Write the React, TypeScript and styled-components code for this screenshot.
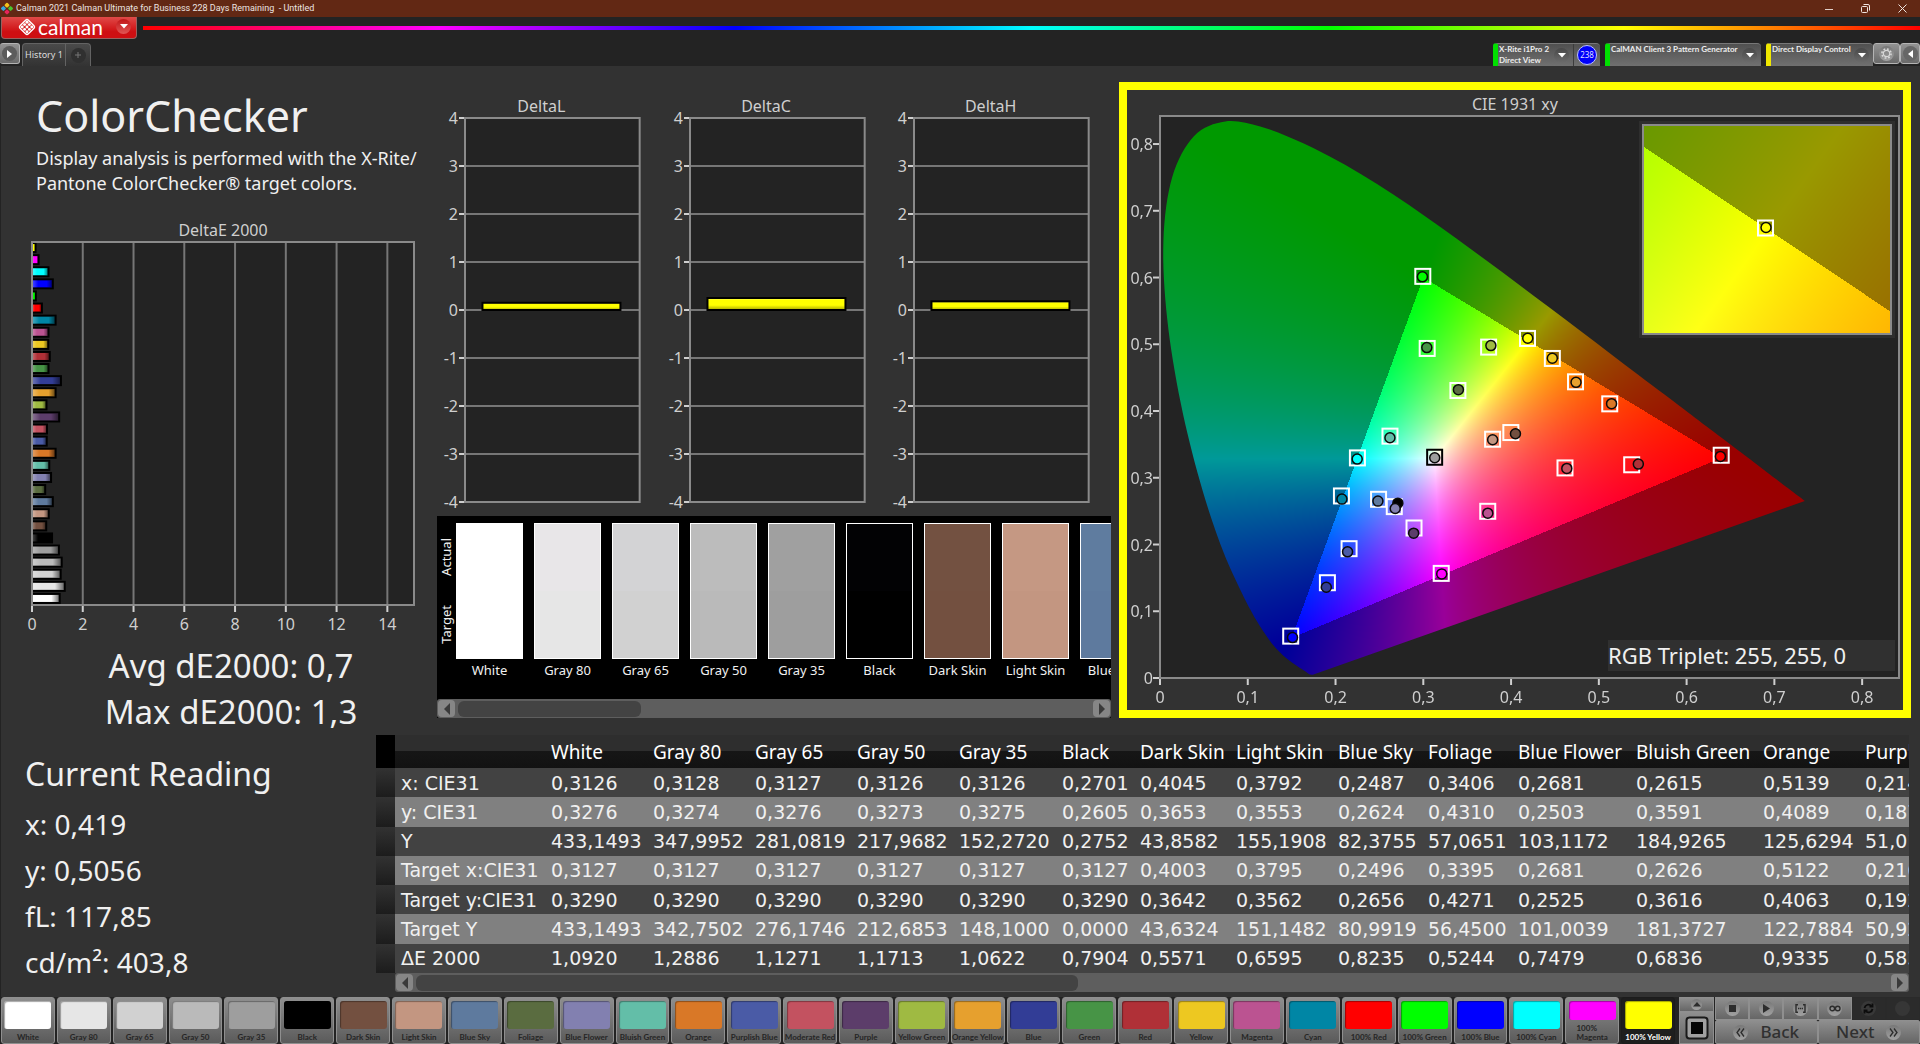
import React, { useLayoutEffect, useRef } from "react";
import styled, { createGlobalStyle, css } from "styled-components";

/* ---------- data ---------- */

type Patch = { name: string; color: string; dE: number };

const patches: Patch[] = [
  { name: "White", color: "#ffffff", dE: 1.09 },
  { name: "Gray 80", color: "#e6e6e6", dE: 1.29 },
  { name: "Gray 65", color: "#d1d1d1", dE: 1.13 },
  { name: "Gray 50", color: "#bababa", dE: 1.17 },
  { name: "Gray 35", color: "#9e9e9e", dE: 1.06 },
  { name: "Black", color: "#000000", dE: 0.79 },
  { name: "Dark Skin", color: "#735040", dE: 0.56 },
  { name: "Light Skin", color: "#c39681", dE: 0.66 },
  { name: "Blue Sky", color: "#5e7a9e", dE: 0.82 },
  { name: "Foliage", color: "#5a6c40", dE: 0.52 },
  { name: "Blue Flower", color: "#8280b0", dE: 0.75 },
  { name: "Bluish Green", color: "#63bea8", dE: 0.68 },
  { name: "Orange", color: "#d97827", dE: 0.93 },
  { name: "Purplish Blue", color: "#4a5ba6", dE: 0.58 },
  { name: "Moderate Red", color: "#c35260", dE: 0.59 },
  { name: "Purple", color: "#5c3d6a", dE: 1.07 },
  { name: "Yellow Green", color: "#9fba42", dE: 0.57 },
  { name: "Orange Yellow", color: "#e6a02e", dE: 0.93 },
  { name: "Blue", color: "#323d96", dE: 1.14 },
  { name: "Green", color: "#479446", dE: 0.65 },
  { name: "Red", color: "#b03037", dE: 0.7 },
  { name: "Yellow", color: "#edc821", dE: 0.64 },
  { name: "Magenta", color: "#bb5391", dE: 0.65 },
  { name: "Cyan", color: "#0086a5", dE: 0.93 },
  { name: "100% Red", color: "#ff0000", dE: 0.39 },
  { name: "100% Green", color: "#00ff00", dE: 0.15 },
  { name: "100% Blue", color: "#0000ff", dE: 0.82 },
  { name: "100% Cyan", color: "#00ffff", dE: 0.65 },
  { name: "100% Magenta", color: "#ff00ff", dE: 0.26 },
  { name: "100% Yellow", color: "#ffff00", dE: 0.14 },
];

const actualTint: Record<string, string> = {
  "Gray 80": "#e8e6e8",
  "Gray 65": "#d3d3d5",
  "Gray 50": "#bcbcbc",
  "Gray 35": "#a0a0a0",
  Black: "#020204",
  "Dark Skin": "#735141",
  "Light Skin": "#c59883",
  "Blue Sky": "#5f7c9f",
};

const columns: { name: string; width: number; values: string[] }[] = [
  { name: "White", width: 102, values: ["0,3126", "0,3276", "433,1493", "0,3127", "0,3290", "433,1493", "1,0920"] },
  { name: "Gray 80", width: 102, values: ["0,3128", "0,3274", "347,9952", "0,3127", "0,3290", "342,7502", "1,2886"] },
  { name: "Gray 65", width: 102, values: ["0,3127", "0,3276", "281,0819", "0,3127", "0,3290", "276,1746", "1,1271"] },
  { name: "Gray 50", width: 102, values: ["0,3126", "0,3273", "217,9682", "0,3127", "0,3290", "212,6853", "1,1713"] },
  { name: "Gray 35", width: 103, values: ["0,3126", "0,3275", "152,2720", "0,3127", "0,3290", "148,1000", "1,0622"] },
  { name: "Black", width: 78, values: ["0,2701", "0,2605", "0,2752", "0,3127", "0,3290", "0,0000", "0,7904"] },
  { name: "Dark Skin", width: 96, values: ["0,4045", "0,3653", "43,8582", "0,4003", "0,3642", "43,6324", "0,5571"] },
  { name: "Light Skin", width: 102, values: ["0,3792", "0,3553", "155,1908", "0,3795", "0,3562", "151,1482", "0,6595"] },
  { name: "Blue Sky", width: 90, values: ["0,2487", "0,2624", "82,3755", "0,2496", "0,2656", "80,9919", "0,8235"] },
  { name: "Foliage", width: 90, values: ["0,3406", "0,4310", "57,0651", "0,3395", "0,4271", "56,4500", "0,5244"] },
  { name: "Blue Flower", width: 118, values: ["0,2681", "0,2503", "103,1172", "0,2681", "0,2525", "101,0039", "0,7479"] },
  { name: "Bluish Green", width: 127, values: ["0,2615", "0,3591", "184,9265", "0,2626", "0,3616", "181,3727", "0,6836"] },
  { name: "Orange", width: 102, values: ["0,5139", "0,4089", "125,6294", "0,5122", "0,4063", "122,7884", "0,9335"] },
  { name: "Purplish Blue", width: 136, values: ["0,2147", "0,1877", "51,0148", "0,2167", "0,1928", "50,9215", "0,5838"] },
];

const rowLabels = ["x: CIE31", "y: CIE31", "Y", "Target x:CIE31", "Target y:CIE31", "Target Y", "ΔE 2000"];

const LABEL_WIDTH = 150;
const TABLE_WIDTH = LABEL_WIDTH + columns.reduce((sum, c) => sum + c.width, 0);

/* target x, target y, measured x, measured y, fill */
const chroma: [number, number, number, number, string][] = [
  [0.3, 0.601, 0.299, 0.601, "#00ff00"],
  [0.305, 0.493, 0.304, 0.495, "#479446"],
  [0.375, 0.495, 0.377, 0.498, "#9fba42"],
  [0.34, 0.43, 0.34, 0.432, "#5a6c40"],
  [0.2626, 0.3616, 0.262, 0.36, "#63bea8"],
  [0.2255, 0.329, 0.2247, 0.328, "#00ffff"],
  [0.2073, 0.272, 0.2073, 0.268, "#0086a5"],
  [0.2496, 0.267, 0.2483, 0.265, "#5e7a9e"],
  [0.2675, 0.256, 0.268, 0.254, "#8280b0"],
  [0.29, 0.224, 0.289, 0.217, "#5c3d6a"],
  [0.216, 0.193, 0.2137, 0.189, "#4a5ba6"],
  [0.1913, 0.142, 0.1895, 0.136, "#323d96"],
  [0.1495, 0.062, 0.151, 0.0605, "#0000ff"],
  [0.321, 0.156, 0.321, 0.156, "#ff00ff"],
  [0.374, 0.249, 0.3735, 0.247, "#bb5391"],
  [0.3795, 0.357, 0.379, 0.357, "#c39681"],
  [0.4003, 0.367, 0.405, 0.366, "#735040"],
  [0.4193, 0.508, 0.419, 0.509, "#ffff00"],
  [0.4476, 0.478, 0.447, 0.479, "#edc821"],
  [0.474, 0.443, 0.474, 0.443, "#e6a02e"],
  [0.513, 0.41, 0.5145, 0.411, "#d97827"],
  [0.462, 0.314, 0.4635, 0.314, "#c35260"],
  [0.538, 0.3187, 0.545, 0.3205, "#b03037"],
  [0.64, 0.333, 0.6385, 0.332, "#ff0000"],
];

/* spectral locus, 380 to 700 nm */
const locus: [number, number][] = [
  [0.1741, 0.005], [0.1714, 0.0051], [0.1689, 0.0069], [0.1644, 0.0109], [0.1566, 0.0177],
  [0.144, 0.0297], [0.1355, 0.0399], [0.1241, 0.0578], [0.1096, 0.0868], [0.0913, 0.1327],
  [0.0687, 0.2007], [0.0454, 0.295], [0.0235, 0.4127], [0.0082, 0.5384], [0.0039, 0.6548],
  [0.0139, 0.7502], [0.0389, 0.812], [0.0743, 0.8338], [0.1142, 0.8262], [0.1547, 0.8059],
  [0.1929, 0.7816], [0.2296, 0.7543], [0.2658, 0.7243], [0.3016, 0.6923], [0.3373, 0.6589],
  [0.3731, 0.6245], [0.4087, 0.5896], [0.4441, 0.5547], [0.4788, 0.5202], [0.5125, 0.4866],
  [0.5448, 0.4544], [0.5752, 0.4242], [0.6029, 0.3965], [0.627, 0.3725], [0.6658, 0.334],
  [0.6915, 0.3083], [0.719, 0.2809], [0.7347, 0.2653],
];

/* ---------- base ---------- */

const sans = `"Noto Sans", "Open Sans", sans-serif`;
const narrow = `Lato, "Noto Sans", sans-serif`;
const wide = `"DejaVu Sans", "Noto Sans", sans-serif`;

const GlobalStyle = createGlobalStyle`
  *, *::before, *::after { box-sizing: border-box; }
  body { margin: 0; background: #323232; color: #f0f0f0; font-family: ${sans}; }
  button { font: inherit; color: inherit; padding: 0; border: 0; background: none; }
  h1, h2, p { margin: 0; font-weight: 400; }
`;

const Shell = styled.div`
  display: flex;
  flex-direction: column;
  min-height: 100vh;
  overflow: hidden;
`;

/* ---------- window chrome ---------- */

const TitleBar = styled.header`
  display: flex;
  align-items: center;
  gap: 2px;
  height: 17px;
  background: #622814;
  font: 9px/17px Roboto, ${sans};
  color: #ece4e0;
`;

const WindowTitle = styled.span`
  flex: 1;
  white-space: pre;
`;

const WindowButton = styled.button`
  display: grid;
  place-items: center;
  width: 35px;
  height: 17px;
`;

const Header = styled.div`
  background: #232323;
`;

const BrandRow = styled.div`
  display: flex;
  align-items: center;
  gap: 6px;
  height: 26px;
  padding-left: 1px;
`;

const BrandButton = styled.button`
  display: flex;
  align-items: center;
  align-self: flex-start;
  gap: 2px;
  width: 136px;
  height: 22px;
  padding: 0 5px 2px 16px;
  background: linear-gradient(#e04a48, #cf0f12 70%);
  border: 1px solid #99615f;
  border-top: 0;
  border-radius: 0 0 4px 4px;
  font: 21px/20px ${narrow};
  color: #fff;
`;

const BrandName = styled.span`
  flex: 1;
  text-align: left;
`;

const Knob = styled.span<{ $size?: number; $tone?: string }>`
  display: grid;
  flex: none;
  place-items: center;
  width: ${(p) => p.$size ?? 15}px;
  height: ${(p) => p.$size ?? 15}px;
  border-radius: 50%;
  background: ${(p) => p.$tone ?? "linear-gradient(#484848, #6c6c6c)"};
`;

const Rainbow = styled.div`
  flex: 1;
  height: 4px;
  margin-bottom: 4px;
  background: linear-gradient(90deg, #f00, #f0f, #00f, #0ff, #0f0, #ff0, #f00);
`;

const TabRow = styled.div`
  display: flex;
  align-items: flex-start;
  height: 23px;
`;

const Tab = styled.button<{ $width: number; $side?: "left" | "right" }>`
  display: grid;
  place-items: center;
  width: ${(p) => p.$width}px;
  height: 23px;
  border: 1px solid #636363;
  border-bottom: 0;
  border-radius: ${(p) => (p.$side === "left" ? "4px 0 0 0" : "0 4px 0 0")};
  background: linear-gradient(#4a4a4a, #333);
  font-size: 9px;
  line-height: 22px;
  color: #dcdcdc;
  & + & { border-left: 0; }
`;

const SquareButton = styled.button<{ $width: number }>`
  display: grid;
  place-items: center;
  width: ${(p) => p.$width}px;
  height: 21px;
  border: 1px solid #b4b4b4;
  border-radius: 3px;
  background: linear-gradient(#929292, #6a6a6a);
`;

const HistoryTabs = styled.div`
  display: flex;
  flex: 1;
  gap: 0;
  ${SquareButton} { margin-right: 2px; border-left: 0; }
`;

const Devices = styled.div`
  display: flex;
  gap: 5px;
`;

const DeviceBox = styled.div<{ $accent: string; $width: number }>`
  display: flex;
  width: ${(p) => p.$width}px;
  height: 23px;
  border-left: 5px solid ${(p) => p.$accent};
  border-top: 1px solid #777;
  border-radius: 3px 4px 0 0;
  background: linear-gradient(#505050, #707070);
`;

const DeviceButton = styled.button`
  display: flex;
  flex: 1;
  align-items: center;
  min-width: 0;
  padding: 0 4px 0 1px;
  font: 8px/11px ${narrow};
  font-weight: 700;
  color: #ededed;
`;

const DeviceName = styled.span`
  flex: 1;
  align-self: flex-start;
  min-width: 0;
  text-align: left;
  white-space: pre;
`;

const Counter = styled.span`
  display: grid;
  place-items: center;
  width: 27px;
  border-left: 1px solid #3c3c3c;
`;

const CounterDot = styled.span`
  width: 20px;
  height: 20px;
  border: 1px solid #b9c0ff;
  border-radius: 50%;
  background: #0000fa;
  font-size: 8px;
  line-height: 18px;
  text-align: center;
  color: #dcdcff;
`;

const ToolButtons = styled.div`
  display: flex;
`;

/* ---------- workspace ---------- */

const Workspace = styled.main`
  display: flex;
  flex: 1;
  flex-direction: column;
  border-left: 1px solid #232323;
  background: #323232;
`;

const Upper = styled.div`
  display: grid;
  flex: 1;
  grid-template-columns: 436px minmax(0, 674fr) minmax(0, 800fr);
  min-height: 600px;
  padding-right: 9px;
`;

const Summary = styled.section`
  display: flex;
  flex-direction: column;
  padding: 20px 0 0 31px;
`;

const Heading = styled.h1`
  padding-left: 4px;
  font: 43px/60px ${sans};
`;

const Intro = styled.p`
  padding-left: 4px;
  font-size: 18px;
  line-height: 25px;
  white-space: nowrap;
`;

const ChartTitle = styled.div<{ $top?: number }>`
  padding-top: ${(p) => p.$top ?? 0}px;
  font-size: 16px;
  line-height: 24px;
  text-align: center;
  color: #cfcfcf;
`;

const DeltaEFigure = styled.figure`
  display: flex;
  flex: 1;
  flex-direction: column;
  margin: 22px 23px 38px 0;
`;

const Plot = styled.div`
  position: relative;
  flex: 1;
  background: #232323;
`;

const PlotSvg = styled.svg`
  position: absolute;
  inset: 0;
  width: 100%;
  height: 100%;
  overflow: visible;
  font-family: ${sans};
  font-size: 16px;
`;

const GamutCanvas = styled.canvas`
  position: absolute;
  inset: 0;
  width: 100%;
  height: 100%;
`;

const Stats = styled.div`
  padding-right: 7px;
  font-size: 33px;
  line-height: 46px;
  text-align: center;
`;

const Middle = styled.section`
  display: flex;
  flex-direction: column;
  padding: 28px 0 17px;
`;

const DeltaRow = styled.div`
  display: grid;
  flex: 1;
  grid-template-columns: repeat(3, 1fr);
`;

const DeltaFigure = styled.figure`
  display: flex;
  flex-direction: column;
  margin: 0 22px 0 6px;
  ${Plot} { margin-left: 22px; }
`;

const SwatchPanel = styled.div`
  display: flex;
  flex-direction: column;
  margin-top: 14px;
  background: #000;
`;

const SwatchStrip = styled.div`
  display: flex;
  height: 183px;
  padding-top: 7px;
  overflow: hidden;
`;

const SideLabels = styled.div`
  display: flex;
  flex: none;
  flex-direction: column;
  justify-content: space-around;
  align-items: center;
  width: 19px;
  height: 136px;
  font-size: 13px;
  line-height: 19px;
`;

const SideLabel = styled.span`
  writing-mode: vertical-rl;
  transform: rotate(180deg);
`;

const SwatchCell = styled.div`
  flex: none;
  width: 67px;
  margin-right: 11px;
  font-size: 13px;
  line-height: 23px;
  text-align: center;
  white-space: nowrap;
`;

const Swatch = styled.div<{ $actual: string; $target: string }>`
  height: 136px;
  border: 1px solid #fff;
  background: linear-gradient(${(p) => p.$actual} 50%, ${(p) => p.$target} 50%);
`;

/* ---------- scroll bar ---------- */

const ScrollTrack = styled.div`
  display: flex;
  align-items: center;
  height: 19px;
  padding: 1px;
  gap: 3px;
  border-radius: 3px;
  background: #5e5e5e;
`;

const ScrollButton = styled.button`
  display: grid;
  place-items: center;
  width: 17px;
  height: 17px;
  border-radius: 4px;
  background: #868686;
`;

const ScrollLane = styled.div`
  flex: 1;
  height: 16px;
`;

const ScrollThumb = styled.div`
  height: 16px;
  border-radius: 6px;
  background: #434343;
`;

function ScrollBar({ size }: { size: number }) {
  return (
    <ScrollTrack>
      <ScrollButton aria-label="Scroll left">
        <svg width="8" height="12"><path d="M7 0V12L1 6Z" fill="#3a3a3a" /></svg>
      </ScrollButton>
      <ScrollLane>
        <ScrollThumb style={{ width: `${size}%` }} />
      </ScrollLane>
      <ScrollButton aria-label="Scroll right">
        <svg width="8" height="12"><path d="M1 0V12L7 6Z" fill="#3a3a3a" /></svg>
      </ScrollButton>
    </ScrollTrack>
  );
}

/* ---------- charts ---------- */

const AXIS = "#8a8a8a";
const GRID = "#767676";
const LABEL = "#cfcfcf";

function DeltaEChart() {
  const max = 15.05;
  const pitch = 100 / patches.length;
  const ticks = [0, 2, 4, 6, 8, 10, 12, 14];
  return (
    <PlotSvg>
      <defs>
        <linearGradient id="barShade">
          <stop offset="0" stopColor="#fff" stopOpacity="0.3" />
          <stop offset="0.3" stopColor="#fff" stopOpacity="0" />
          <stop offset="0.7" stopColor="#000" stopOpacity="0" />
          <stop offset="1" stopColor="#000" stopOpacity="0.6" />
        </linearGradient>
      </defs>
      {ticks.map((t) => (
        <g key={t}>
          <svg x={`${(t / max) * 100}%`} overflow="visible">
            <line y1="0" y2="100%" stroke={GRID} strokeWidth="2" />
          </svg>
          <svg x={`${(t / max) * 100}%`} y="100%" overflow="visible">
            <line y1="0" y2="7" stroke={LABEL} strokeWidth="2" />
            <text y="25" textAnchor="middle" fill={LABEL}>{t}</text>
          </svg>
        </g>
      ))}
      {[...patches].reverse().map((p, i) => (
        <svg key={p.name} x="0" y={`${(i + 0.5) * pitch}%`} overflow="visible">
          <rect x="0" y="-5" width={`${(p.dE / max) * 100}%`} height="9" fill={p.color} stroke="#000" strokeWidth="2" />
          <rect x="0" y="-4" width={`${(p.dE / max) * 100}%`} height="7" fill="url(#barShade)" />
        </svg>
      ))}
      <rect width="100%" height="100%" fill="none" stroke={AXIS} strokeWidth="2" />
    </PlotSvg>
  );
}

function DeltaChart({ title, value }: { title: string; value: number }) {
  const ticks = [4, 3, 2, 1, 0, -1, -2, -3, -4];
  return (
    <DeltaFigure>
      <ChartTitle as="figcaption">{title}</ChartTitle>
      <Plot>
        <PlotSvg>
          <defs>
            <linearGradient id="yellowBar" x2="0" y2="1">
              <stop offset="0" stopColor="#ffff60" />
              <stop offset="0.2" stopColor="#ffff00" />
              <stop offset="0.6" stopColor="#ffff00" />
              <stop offset="1" stopColor="#a5a500" />
            </linearGradient>
          </defs>
          {ticks.map((t) => (
            <svg key={t} y={`${((4 - t) / 8) * 100}%`} overflow="visible">
              <line x1="0" x2="100%" stroke={GRID} strokeWidth="2" />
              <line x1="-6" x2="0" stroke={LABEL} strokeWidth="2" />
              <text x="-7" y="6" textAnchor="end" fill={LABEL}>{t}</text>
            </svg>
          ))}
          <rect width="100%" height="100%" fill="none" stroke={AXIS} strokeWidth="2" />
          <rect
            x="10%"
            y={`${((4 - value) / 8) * 100}%`}
            width="79%"
            height={`${(value / 8) * 100}%`}
            fill="url(#yellowBar)"
            stroke="#000"
            strokeWidth="2"
          />
        </PlotSvg>
      </Plot>
    </DeltaFigure>
  );
}

type Bounds = { x0: number; x1: number; y0: number; y1: number };

function paintGamut(canvas: HTMLCanvasElement, b: Bounds, clip: boolean) {
  const w = Math.max(1, Math.round(canvas.clientWidth));
  const h = Math.max(1, Math.round(canvas.clientHeight));
  canvas.width = w;
  canvas.height = h;
  const ctx = canvas.getContext("2d");
  if (!ctx) return;
  const img = ctx.createImageData(w, h);
  for (let j = 0; j < h; j++) {
    const y = Math.max(0.0005, b.y1 - ((j + 0.5) / h) * (b.y1 - b.y0));
    for (let i = 0; i < w; i++) {
      const x = b.x0 + ((i + 0.5) / w) * (b.x1 - b.x0);
      const z = 1 - x - y;
      const rgb = [
        3.2406 * x - 1.5372 * y - 0.4986 * z,
        -0.9689 * x + 1.8758 * y + 0.0415 * z,
        0.0557 * x - 0.204 * y + 1.057 * z,
      ];
      const outside = Math.min(rgb[0], rgb[1], rgb[2]) < 0;
      const top = Math.max(rgb[0], rgb[1], rgb[2]);
      const dim = outside ? 0.6 : 1;
      const k = (j * w + i) * 4;
      for (let c = 0; c < 3; c++) {
        img.data[k + c] = (255 * dim * Math.max(0, rgb[c])) / top;
      }
      img.data[k + 3] = 255;
    }
  }
  ctx.putImageData(img, 0, 0);
  if (!clip) return;
  const pts = locus.map((p) => [
    ((p[0] - b.x0) / (b.x1 - b.x0)) * w,
    ((b.y1 - p[1]) / (b.y1 - b.y0)) * h,
  ]);
  ctx.globalCompositeOperation = "destination-in";
  ctx.beginPath();
  ctx.moveTo(pts[0][0], pts[0][1]);
  for (let n = 0; n < pts.length - 1; n++) {
    const before = pts[Math.max(0, n - 1)];
    const from = pts[n];
    const to = pts[n + 1];
    const after = pts[Math.min(pts.length - 1, n + 2)];
    ctx.bezierCurveTo(
      from[0] + (to[0] - before[0]) / 6,
      from[1] + (to[1] - before[1]) / 6,
      to[0] - (after[0] - from[0]) / 6,
      to[1] - (after[1] - from[1]) / 6,
      to[0],
      to[1]
    );
  }
  ctx.closePath();
  ctx.fill();
}

function Gamut({ bounds, clip }: { bounds: Bounds; clip: boolean }) {
  const ref = useRef<HTMLCanvasElement>(null);
  useLayoutEffect(() => {
    const draw = () => ref.current && paintGamut(ref.current, bounds, clip);
    draw();
    window.addEventListener("resize", draw);
    return () => window.removeEventListener("resize", draw);
  }, [bounds, clip]);
  return <GamutCanvas ref={ref} />;
}

const CiePanel = styled.section`
  display: flex;
  flex-direction: column;
  margin: 16px 0 17px 8px;
  border: 8px solid #ffff00;
  ${Plot} { margin: 0 4px 32px 33px; }
`;

const Inset = styled.div`
  position: absolute;
  top: 8px;
  right: 7px;
  width: 250px;
  height: 211px;
  border: 2px solid #8a8a8a;
  box-shadow: 0 0 0 3px #2e2e2e;
`;

const Triplet = styled.div`
  position: absolute;
  right: 4px;
  bottom: 7px;
  width: 287px;
  background: #303030;
  font-size: 22px;
  line-height: 31px;
`;

const MAIN: Bounds = { x0: 0, x1: 0.842, y0: 0, y1: 0.842 };
const ZOOM: Bounds = { x0: 0.394, x1: 0.444, y0: 0.4804, y1: 0.5304 };

function Marker({ x, y, fill, square, stroke = "#fff" }: { x: number; y: number; fill?: string; square?: boolean; stroke?: string }) {
  return (
    <svg x={`${(x / MAIN.x1) * 100}%`} y={`${(1 - y / MAIN.y1) * 100}%`} overflow="visible">
      {square ? (
        <rect x="-8" y="-8" width="15" height="15" fill="none" stroke={stroke} strokeWidth="2" />
      ) : (
        <circle r="5" fill={fill} stroke="#0a0a0a" strokeWidth="1.5" />
      )}
    </svg>
  );
}

function CieChart() {
  const ticks = [0, 1, 2, 3, 4, 5, 6, 7, 8];
  const text = (n: number) => (n === 0 ? "0" : `0,${n}`);
  return (
    <CiePanel>
      <ChartTitle $top={2}>CIE 1931 xy</ChartTitle>
      <Plot>
        <Gamut bounds={MAIN} clip />
        <PlotSvg>
          <rect width="100%" height="100%" fill="none" stroke={AXIS} strokeWidth="2" />
          {ticks.map((n) => (
            <g key={n}>
              <svg x={`${(n / 8.42) * 100}%`} y="100%" overflow="visible">
                <line y1="1" y2="7" stroke={LABEL} strokeWidth="2" />
                <text y="25" textAnchor="middle" fill={LABEL}>{text(n)}</text>
              </svg>
              <svg y={`${(1 - n / 8.42) * 100}%`} overflow="visible">
                <line x1="-7" x2="-1" stroke={LABEL} strokeWidth="2" />
                <text x="-7" y="6" textAnchor="end" fill={LABEL}>{text(n)}</text>
              </svg>
            </g>
          ))}
          {chroma.map((c, i) => (
            <Marker key={i} x={c[0]} y={c[1]} square />
          ))}
          <Marker x={0.3135} y={0.33} square stroke="#000" />
          <Marker x={0.271} y={0.262} fill="#000" />
          <Marker x={0.313} y={0.33} fill="#9e9e9e" />
          {chroma.map((c, i) => (
            <Marker key={i} x={c[2]} y={c[3]} fill={c[4]} />
          ))}
        </PlotSvg>
        <Inset>
          <Gamut bounds={ZOOM} clip={false} />
          <PlotSvg>
            <svg x="50%" y="50%" overflow="visible">
              <rect x="-9" y="-9" width="15" height="15" fill="none" stroke="#fff" strokeWidth="2" />
              <circle cx="-1" cy="-2" r="5" fill="#ffff00" stroke="#0a0a0a" strokeWidth="1.5" />
            </svg>
          </PlotSvg>
        </Inset>
        <Triplet>RGB Triplet: 255, 255, 0</Triplet>
      </Plot>
    </CiePanel>
  );
}

/* ---------- lower section ---------- */

const Lower = styled.div`
  display: grid;
  grid-template-columns: 375px minmax(0, 1fr);
  padding: 0 11px 5px 0;
`;

const Reading = styled.section`
  padding: 15px 0 0 24px;
  font-size: 28px;
  line-height: 46px;
`;

const ReadingTitle = styled.h2`
  margin-bottom: 3px;
  font-size: 32px;
  line-height: 48px;
`;

const DataBlock = styled.div`
  display: grid;
  grid-template-columns: 19px minmax(0, 1fr);
`;

const Gutter = styled.div`
  display: grid;
  grid-template-rows: 33px repeat(7, 1fr);
  height: 238px;
`;

const GutterCell = styled.div<{ $head?: boolean }>`
  background: ${(p) => (p.$head ? "#000" : "linear-gradient(#323232, #1c1c1c)")};
`;

const TableClip = styled.div`
  overflow: hidden;
`;

const DataTable = styled.table`
  width: ${TABLE_WIDTH}px;
  height: 238px;
  border-collapse: collapse;
  table-layout: fixed;
  font: 19px/26px ${wide};
  white-space: nowrap;
  th, td { padding: 0 0 0 6px; font-weight: 400; text-align: left; }
`;

const HeadRow = styled.tr`
  height: 33px;
  background: linear-gradient(#2e2e2e 50%, #161616 50%, #121212);
  font-family: ${sans};
  font-size: 19px;
  color: #fff;
`;

const BodyRow = styled.tr<{ $light: boolean }>`
  background: ${(p) => (p.$light ? "#808080" : "#424242")};
`;

/* ---------- pattern bar ---------- */

const PatternBar = styled.footer`
  display: flex;
  height: 47px;
  background: #232323;
`;

const PatternList = styled.div`
  display: grid;
  flex: 1;
  grid-template-columns: repeat(30, minmax(0, 1fr));
  gap: 2px;
  padding: 0 4px 0 1px;
`;

const PatternButton = styled.button<{ $active: boolean }>`
  display: flex;
  flex-direction: column;
  align-items: center;
  padding: 3px 0 1px;
  border: 1px solid ${(p) => (p.$active ? "#1c1c1c" : "#8f8f8f")};
  border-radius: 3px;
  background: ${(p) => (p.$active ? "#1e1e1e" : "linear-gradient(#8e8e8e, #5a5a5a)")};
  font: 8px/9px ${narrow};
  font-weight: 700;
  color: ${(p) => (p.$active ? "#fff" : "#262626")};
`;

const PatternColor = styled.span<{ $color: string }>`
  flex: 1;
  width: 47px;
  border-radius: 3px;
  background: ${(p) => p.$color};
  box-shadow: inset 1px 1px 1px rgba(0, 0, 0, 0.35);
`;

const PatternName = styled.span<{ $wrap: boolean }>`
  padding-top: 4px;
  text-align: left;
  white-space: ${(p) => (p.$wrap ? "pre-line" : "nowrap")};
`;

const steel = css`
  border: 1px solid #8f8f8f;
  background: linear-gradient(#8e8e8e, #666);
`;

const StopColumn = styled.div`
  display: grid;
  grid-template-rows: 15px 1fr;
  width: 35px;
  margin-right: 1px;
`;

const SteelButton = styled.button<{ $dark?: boolean }>`
  display: flex;
  align-items: center;
  justify-content: center;
  gap: 12px;
  ${steel}
  ${(p) => p.$dark && css`border-color: #2a2a2a; background: #2b2b2b;`}
`;

const Transport = styled.div`
  display: grid;
  grid-template-rows: 23px 1fr;
  width: 205px;
`;

const TransportRow = styled.div`
  display: grid;
  grid-auto-columns: 1fr;
  grid-auto-flow: column;
`;

const NavButton = styled(SteelButton)`
  border-radius: 2px;
  font-size: 17px;
  font-weight: 500;
  line-height: 22px;
  color: #303030;
`;

const knobTone = "linear-gradient(#777, #a2a2a2)";

function Caret({ color = "#fff" }: { color?: string }) {
  return <svg width="8" height="5"><path d="M0 0H8L4 4.5Z" fill={color} /></svg>;
}

function CalmanMark() {
  return (
    <svg width="18" height="18" viewBox="0 0 18 18">
      <rect x="3.2" y="3.2" width="11.6" height="11.6" rx="2" transform="rotate(45 9 9)" fill="none" stroke="#fff" strokeWidth="1.4" />
      <g fill="#fff">
        {[[9, 4.2], [6.6, 6.6], [11.4, 6.6], [4.2, 9], [9, 9], [13.8, 9], [6.6, 11.4], [11.4, 11.4], [9, 13.8]].map(([x, y]) => (
          <circle key={`${x}-${y}`} cx={x} cy={y} r="1.45" />
        ))}
      </g>
    </svg>
  );
}

function AppIcon() {
  const tiles: [number, number, string][] = [
    [7, 3.2, "#f3c11b"], [3.4, 6.5, "#36a7e0"], [10.6, 6.5, "#49c52e"], [7, 10, "#e8245c"],
  ];
  return (
    <svg width="14" height="14" viewBox="0 0 14 14">
      {tiles.map(([x, y, c]) => (
        <rect key={c} x={x - 2} y={y - 2} width="4" height="4" rx="1" transform={`rotate(45 ${x} ${y})`} fill={c} />
      ))}
    </svg>
  );
}

function Device({ name, accent, width, count }: { name: string; accent: string; width: number; count?: number }) {
  return (
    <DeviceBox $accent={accent} $width={width}>
      <DeviceButton>
        <DeviceName>{name}</DeviceName>
        <Knob><Caret /></Knob>
      </DeviceButton>
      {count !== undefined && (
        <Counter><CounterDot>{count}</CounterDot></Counter>
      )}
    </DeviceBox>
  );
}

const ink = "#2c2c2c";

export default function App() {
  return (
    <Shell>
      <GlobalStyle />
      <TitleBar>
        <AppIcon />
        <WindowTitle>{"Calman 2021 Calman Ultimate for Business 228 Days Remaining  - Untitled"}</WindowTitle>
        <WindowButton aria-label="Minimize">
          <svg width="8" height="8"><path d="M0 4.5H8" stroke="#e0d0ca" /></svg>
        </WindowButton>
        <WindowButton aria-label="Restore">
          <svg width="9" height="9" fill="none" stroke="#f0e4e0"><rect x="0.5" y="2.5" width="6" height="6" rx="1" /><path d="M2.5 0.5H7Q8.5 0.5 8.5 2V6.5" /></svg>
        </WindowButton>
        <WindowButton aria-label="Close">
          <svg width="9" height="9" stroke="#f0e4e0"><path d="M0.5 0.5L8.5 8.5M8.5 0.5L0.5 8.5" /></svg>
        </WindowButton>
      </TitleBar>

      <Header>
        <BrandRow>
          <BrandButton>
            <CalmanMark />
            <BrandName>calman</BrandName>
            <Knob $tone="linear-gradient(#c01618, #e25553)"><Caret /></Knob>
          </BrandButton>
          <Rainbow />
        </BrandRow>
        <TabRow>
          <HistoryTabs>
            <SquareButton $width={20} aria-label="Expand panel">
              <Knob $tone="#5c5c5c"><svg width="5" height="8"><path d="M0 0L5 4L0 8Z" fill="#fff" /></svg></Knob>
            </SquareButton>
            <Tab $width={44} $side="left">History 1</Tab>
            <Tab $width={25} $side="right" aria-label="Add tab">
              <Knob $tone="#303030"><svg width="6" height="6"><path d="M3 0V6M0 3H6" stroke="#777" /></svg></Knob>
            </Tab>
          </HistoryTabs>
          <Devices>
            <Device name={"X-Rite i1Pro 2\nDirect View"} accent="#00e000" width={107} count={238} />
            <Device name="CalMAN Client 3 Pattern Generator" accent="#00e000" width={156} />
            <Device name="Direct Display Control" accent="#f0e800" width={107} />
          </Devices>
          <ToolButtons>
            <SquareButton $width={27} aria-label="Settings">
              <Knob $tone={knobTone}>
                <svg width="11" height="11" viewBox="0 0 11 11" fill="none" stroke="#d8d8d8">
                  <circle cx="5.5" cy="5.5" r="3.2" strokeWidth="1.2" />
                  <circle cx="5.5" cy="5.5" r="4.6" strokeWidth="1.6" strokeDasharray="1.8 1.8" />
                </svg>
              </Knob>
            </SquareButton>
            <SquareButton $width={20} aria-label="Collapse panel">
              <Knob $tone="#666"><svg width="5" height="8"><path d="M5 0L0 4L5 8Z" fill="#fff" /></svg></Knob>
            </SquareButton>
          </ToolButtons>
        </TabRow>
      </Header>

      <Workspace>
        <Upper>
          <Summary>
            <Heading>ColorChecker</Heading>
            <Intro>
              Display analysis is performed with the X-Rite/
              <br />
              Pantone ColorChecker® target colors.
            </Intro>
            <DeltaEFigure>
              <ChartTitle as="figcaption">DeltaE 2000</ChartTitle>
              <Plot><DeltaEChart /></Plot>
            </DeltaEFigure>
            <Stats>
              <div>Avg dE2000: 0,7</div>
              <div>Max dE2000: 1,3</div>
            </Stats>
          </Summary>

          <Middle>
            <DeltaRow>
              <DeltaChart title="DeltaL" value={0.15} />
              <DeltaChart title="DeltaC" value={0.25} />
              <DeltaChart title="DeltaH" value={0.18} />
            </DeltaRow>
            <SwatchPanel>
              <SwatchStrip>
                <SideLabels>
                  <SideLabel>Actual</SideLabel>
                  <SideLabel>Target</SideLabel>
                </SideLabels>
                {patches.slice(0, 9).map((p) => (
                  <SwatchCell key={p.name}>
                    <Swatch $actual={actualTint[p.name] ?? p.color} $target={p.color} />
                    {p.name}
                  </SwatchCell>
                ))}
              </SwatchStrip>
              <ScrollBar size={29} />
            </SwatchPanel>
          </Middle>

          <CieChart />
        </Upper>

        <Lower>
          <Reading>
            <ReadingTitle>Current Reading</ReadingTitle>
            <div>x: 0,419</div>
            <div>y: 0,5056</div>
            <div>fL: 117,85</div>
            <div>cd/m²: 403,8</div>
          </Reading>
          <DataBlock>
            <Gutter>
              <GutterCell $head />
              {rowLabels.map((l) => <GutterCell key={l} />)}
            </Gutter>
            <TableClip>
              <DataTable>
                <colgroup>
                  <col style={{ width: LABEL_WIDTH }} />
                  {columns.map((c) => <col key={c.name} style={{ width: c.width }} />)}
                </colgroup>
                <thead>
                  <HeadRow>
                    <th />
                    {columns.map((c) => <th key={c.name} scope="col">{c.name}</th>)}
                  </HeadRow>
                </thead>
                <tbody>
                  {rowLabels.map((label, r) => (
                    <BodyRow key={label} $light={r % 2 === 1}>
                      <th scope="row">{label}</th>
                      {columns.map((c) => <td key={c.name}>{c.values[r]}</td>)}
                    </BodyRow>
                  ))}
                </tbody>
              </DataTable>
              <ScrollBar size={45} />
            </TableClip>
          </DataBlock>
        </Lower>
      </Workspace>

      <PatternBar>
        <PatternList>
          {patches.map((p) => {
            const wrap = p.name === "100% Magenta";
            return (
              <PatternButton key={p.name} $active={p.name === "100% Yellow"}>
                <PatternColor $color={p.color} />
                <PatternName $wrap={wrap}>{wrap ? "100%\nMagenta" : p.name}</PatternName>
              </PatternButton>
            );
          })}
        </PatternList>
        <StopColumn>
          <SteelButton aria-label="Expand">
            <Knob $size={11} $tone={knobTone}><svg width="8" height="5"><path d="M0 4.5H8L4 0Z" fill={ink} /></svg></Knob>
          </SteelButton>
          <SteelButton aria-label="Pattern window">
            <svg width="24" height="24"><rect x="1.5" y="1.5" width="21" height="21" rx="3" fill="#a0a0a0" stroke="#1a1a1a" strokeWidth="2" /><rect x="6" y="6" width="12" height="12" fill="#050505" /></svg>
          </SteelButton>
        </StopColumn>
        <Transport>
          <TransportRow>
            <SteelButton aria-label="Stop">
              <Knob $tone={knobTone}><svg width="7" height="7"><rect width="7" height="7" fill={ink} /></svg></Knob>
            </SteelButton>
            <SteelButton aria-label="Play">
              <Knob $tone={knobTone}><svg width="8" height="9"><path d="M1 0L8 4.5L1 9Z" fill={ink} /></svg></Knob>
            </SteelButton>
            <SteelButton aria-label="Read series">
              <Knob $tone={knobTone}>
                <svg width="11" height="9" fill="none" stroke={ink} strokeWidth="1.4"><path d="M3 0.7H1V8.3H3M8 0.7H10V8.3H8" /><path d="M3 4.5H8" strokeDasharray="1.4 0.6" /></svg>
              </Knob>
            </SteelButton>
            <SteelButton aria-label="Continuous">
              <Knob $tone={knobTone}>
                <svg width="12" height="7" fill="none" stroke={ink} strokeWidth="1.4"><circle cx="3.3" cy="3.5" r="2.3" /><circle cx="8.7" cy="3.5" r="2.3" /></svg>
              </Knob>
            </SteelButton>
            <SteelButton $dark aria-label="Refresh">
              <Knob $tone="#383838">
                <svg width="11" height="11" viewBox="0 0 11 11" fill="none" stroke="#0c0c0c" strokeWidth="1.8"><path d="M1.5 5A4 4 0 0 1 8.5 3M9.5 6A4 4 0 0 1 2.5 8" /><path d="M6.5 3.5H9.5V0.5M4.5 7.5H1.5V10.5" /></svg>
              </Knob>
            </SteelButton>
            <SteelButton $dark aria-label="Record"><Knob $tone="#363636" /></SteelButton>
          </TransportRow>
          <TransportRow>
            <NavButton>
              <Knob $tone={knobTone}><svg width="9" height="9" fill="none" stroke={ink} strokeWidth="1.3"><path d="M4 0.5L1 4.5L4 8.5M8 0.5L5 4.5L8 8.5" /></svg></Knob>
              Back
            </NavButton>
            <NavButton>
              Next
              <Knob $tone={knobTone}><svg width="9" height="9" fill="none" stroke={ink} strokeWidth="1.3"><path d="M1 0.5L4 4.5L1 8.5M5 0.5L8 4.5L5 8.5" /></svg></Knob>
            </NavButton>
          </TransportRow>
        </Transport>
      </PatternBar>
    </Shell>
  );
}
